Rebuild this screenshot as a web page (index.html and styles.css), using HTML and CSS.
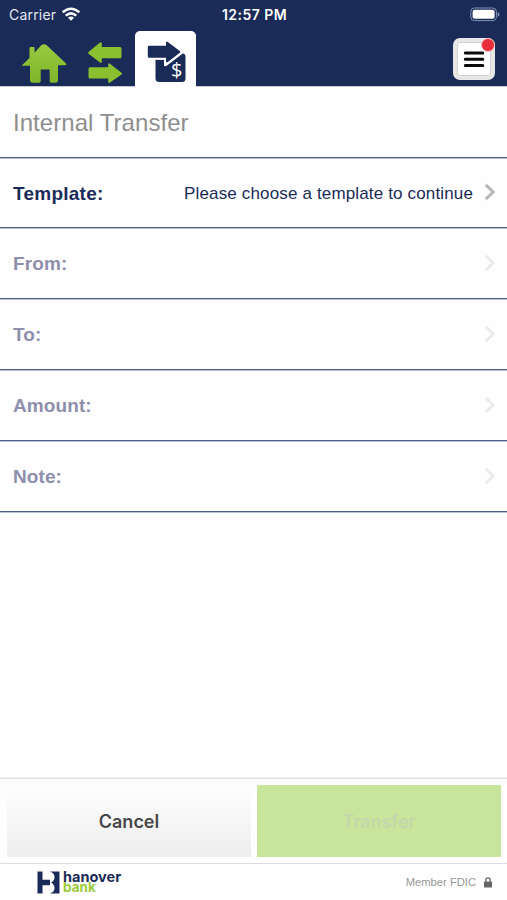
FILE: index.html
```html
<!DOCTYPE html>
<html lang="en">
  <head>
    <meta charset="utf-8">
    <title>Internal Transfer</title>
    <link rel="stylesheet" href="styles.css">
  </head>
  <body>
    <header class="header">
      <div class="status">
        <div class="carrier">
          <span>Carrier</span>
          <svg width="20" height="15" viewBox="0 0 20 15" fill="none" stroke="#fff" stroke-width="2.5">
            <path d="M1.7 5.3Q10-1.9 18.3 5.3" />
            <path d="M4.7 8.6Q10 4.1 15.3 8.6" />
            <path d="M7 10.7Q10 8.5 13 10.7L10 13.8Z" fill="#fff" stroke="none" />
          </svg>
        </div>
        <span class="time">12:57 PM</span>
        <svg class="battery" width="30" height="15" viewBox="0 0 30 15">
          <rect x=".8" y="1" width="25.6" height="12.6" rx="3.5" fill="none" stroke="#8590b2" />
          <rect x="2.6" y="2.8" width="22" height="9" rx="2" fill="#fff" />
          <path d="M27.7 5v5q1.8-1 1.8-2.5T27.7 5Z" fill="#8590b2" />
        </svg>
      </div>
      <nav class="tabs">
        <a class="tab home" href="#">
          <svg width="46" height="40" viewBox="0 0 46 40" fill="url(#green)">
            <defs>
              <linearGradient id="green" x1="0" y1="0" x2="0" y2="1">
                <stop offset="0" stop-color="#98ca3d" />
                <stop offset="1" stop-color="#7fb52b" />
              </linearGradient>
            </defs>
            <path d="M1 22.2 8.5 15V5q0-1 1-1h3q1 0 1 1v4.8L20 2.5q3-2.5 6 0L45 20.5q1.2 1.8-.7 1.8H37V37q0 2.7-2.5 2.7h-4.2q-1.6 0-1.6-1.7V26.5h-9V38q0 1.700-1.700 1.700h-6.500Q9 39.700 9 37V22.800H2q-1.700 0-1-.600Z" />
          </svg>
        </a>
        <a class="tab arrows" href="#">
          <svg width="34" height="42" viewBox="0 0 34 42" fill="#8ac02f">
            <path d="M.5 10 12 .6q1.8-1.2 1.8.8v3.5H32q1.5 0 1.5 1.5v8.4q0 1.5-1.5 1.5H13.8v3.5q0 1.8-1.8.7L.5 11.8Q-.3 11 .5 10Z" />
            <path d="m33.5 30.7-11.5-9q-1.8-1.2-1.8.8v2.8H2q-1.5 0-1.5 1.5V35q0 1.5 1.5 1.5h18.2v3.3q0 1.8 1.8.7l11.5-8q.8-.9 0-1.8Z" />
          </svg>
        </a>
        <a class="tab active" href="#">
          <svg width="40" height="42" viewBox="0 0 40 42">
            <path d="M8.500 18.500H17v5.200q.3 2.200 2 1.200L35 12.300q3.500.2 3.500 3.700v21.500q0 3.500-3.500 3.500H12.500q-4 0-4-3.500Z" fill="#1a2b58" />
            <path d="M8.500 18H18v5q0 2 1.500 1L36 11.500" fill="none" stroke="#fff" stroke-width="1.300" />
            <path d="M2 4.800h17V1.500q0-1.800 1.800-.5l12 9q1 .9 0 1.800L20.800 21q-1.800 1.200-1.800-.7v-3.500H2q-1.200 0-1.200-1.300V6q0-1.200 1.200-1.200Z" fill="#1a2b58" />
            <text class="dollar" x="24" y="36">$</text>
          </svg>
        </a>
        <button class="menu" aria-label="Menu">
          <svg width="22" height="20" viewBox="0 0 22 20" stroke="#0b0b0b" stroke-width="3" stroke-linecap="round">
            <path d="M2.300 4h17.500M2.300 10.200h17.500M2.300 16.500h17.500" />
          </svg>
          <span class="badge"></span>
        </button>
      </nav>
    </header>

    <main class="main">
      <h1 class="title">Internal Transfer</h1>
      <div class="row template">
        <label>Template:</label>
        <span class="value">Please choose a template to continue</span>
        <svg class="chevron" width="12" height="18" viewBox="0 0 12 18"><path d="m1.8 1.8 7.4 7.2-7.4 7.2" /></svg>
      </div>
      <div class="row disabled">
        <label>From:</label>
        <svg class="chevron" width="12" height="18" viewBox="0 0 12 18"><path d="m1.8 1.8 7.4 7.2-7.4 7.2" /></svg>
      </div>
      <div class="row disabled">
        <label>To:</label>
        <svg class="chevron" width="12" height="18" viewBox="0 0 12 18"><path d="m1.8 1.8 7.4 7.2-7.4 7.2" /></svg>
      </div>
      <div class="row disabled">
        <label>Amount:</label>
        <svg class="chevron" width="12" height="18" viewBox="0 0 12 18"><path d="m1.8 1.8 7.4 7.2-7.4 7.2" /></svg>
      </div>
      <div class="row disabled">
        <label>Note:</label>
        <svg class="chevron" width="12" height="18" viewBox="0 0 12 18"><path d="m1.8 1.8 7.4 7.2-7.4 7.2" /></svg>
      </div>
    </main>

    <div class="actions">
      <button class="cancel">Cancel</button>
      <button class="transfer" disabled>Transfer</button>
    </div>

    <footer class="footer">
      <div class="brand">
        <svg width="23" height="23" viewBox="0 0 23 23" fill="#1b2b59">
          <path d="M.5.5h5v8.300H13v5.400H5.500v8.300h-5Z" />
          <path d="M13 .5h9.500v22H13q4.500-1.500 4.500-5.500 0-3.500-3.500-5.500 3.500-2 3.500-5.500 0-4-4.500-5.500Z" />
        </svg>
        <div class="brand-name">
          <span>hanover</span>
          <span class="bank">bank</span>
        </div>
      </div>
      <div class="fdic">
        <span>Member FDIC</span>
        <svg width="8" height="11" viewBox="0 0 8 11">
          <path d="M1.8 5V3q0-2.200 2.200-2.200T6.200 3v2" fill="none" stroke="#666" stroke-width="1.300" />
          <rect y="4.600" width="8" height="6" rx=".7" fill="#666" />
        </svg>
      </div>
    </footer>
  </body>
</html>
```
FILE: styles.css
```css
* {
  box-sizing: border-box;
}
body {
  margin: 0;
  height: 100vh;
  display: flex;
  flex-direction: column;
  overflow: hidden;
  background: #fefefe;
  color: #1a2b58;
  font-family: "Liberation Sans", Arial, sans-serif;
}
svg {
  display: block;
  flex: none;
}
button {
  border: none;
  padding: 0;
  font-family: Inter, sans-serif;
}

/* header */
.header {
  height: 86px;
  background: #1a2b58;
  box-shadow: 0 1px 0 #c5cad9;
}
.status {
  height: 28px;
  padding: 0 7px 0 9px;
  display: grid;
  grid-template-columns: 1fr auto 1fr;
  align-items: center;
  color: #fff;
  font: 14px Inter, sans-serif;
}
.carrier {
  display: flex;
  align-items: center;
  gap: 5px;
  color: #e4e8f2;
  letter-spacing: 0.2px;
}
.time {
  font-weight: 600;
  font-size: 14px;
  letter-spacing: 0.45px;
}
.battery {
  justify-self: end;
}
.tabs {
  height: 58px;
  display: flex;
  align-items: flex-end;
  padding: 0 12px 0 21px;
}
.home {
  padding-bottom: 3px;
}
.arrows {
  margin-left: 21px;
  padding-bottom: 2px;
}
.active {
  width: 61px;
  height: 55px;
  margin-left: 13px;
  padding: 10px 0 0 12px;
  border-radius: 5px 5px 0 0;
  background: #fefefe;
  box-shadow: 0 1px 0 #fefefe;
}
.dollar {
  font: 20px "Open Sans", sans-serif;
  fill: #fff;
}
.menu {
  position: relative;
  width: 42px;
  height: 42px;
  margin: 0 0 6px auto;
  display: flex;
  align-items: center;
  justify-content: center;
  border: 4px solid #e7e7e7;
  border-radius: 7px;
  background: #fff;
  box-shadow: inset 0 0 0 1px #d1d1d1;
}
.badge {
  position: absolute;
  top: -4px;
  right: -4px;
  width: 14px;
  height: 14px;
  border: 1px solid #f3bfc3;
  border-radius: 50%;
  background: #e92e3b;
}

/* form rows */
.main {
  flex: 1;
}
.title,
.row {
  margin: 0;
  border-bottom: 1px solid #4c5f87;
  box-shadow: 0 1px 0 #b8c3d8;
}
.title {
  height: 72px;
  padding-left: 13px;
  color: #8f8f8f;
  font-size: 24px;
  font-weight: normal;
  line-height: 73px;
  letter-spacing: 0.05px;
}
.row {
  height: 71px;
  padding: 2px 11px 0 13px;
  display: flex;
  align-items: center;
}
.row label {
  font-size: 19px;
  font-weight: bold;
  letter-spacing: 0.1px;
}
.template {
  height: 70px;
}
.template label {
  letter-spacing: 0.25px;
}
.value {
  margin-left: auto;
  font-size: 17px;
  letter-spacing: 0.15px;
}
.chevron {
  margin: -3px 0 0 11px;
  fill: none;
  stroke: #b8b8b8;
  stroke-width: 3;
}
.disabled label {
  color: #8e8fac;
}
.disabled .chevron {
  margin-left: auto;
  stroke: #ebebeb;
}

/* bottom bar */
.actions {
  height: 86px;
  display: grid;
  grid-template-columns: 1fr 1fr;
  gap: 6px;
  padding: 6px 6px 6px 7px;
  border-top: 1px solid #ddd;
  border-bottom: 1px solid #ddd;
  box-shadow: 0 -1px 0 #efefef;
}
.actions button {
  font-size: 18px;
  font-weight: 600;
}
.cancel {
  color: #474747;
  background: linear-gradient(#fefefe, #eeeeee);
}
.transfer {
  color: #c4d7ab;
  background: #c9e49b;
}
.footer {
  height: 36px;
  padding: 0 15px 0 37px;
  display: flex;
  align-items: center;
  justify-content: space-between;
}
.brand {
  display: flex;
  gap: 3px;
}
.brand-name {
  display: flex;
  flex-direction: column;
  font: bold 14.5px/11px Inter, sans-serif;
  letter-spacing: 0;
}
.bank {
  color: #9bcb3b;
  font-size: 13.5px;
}
.fdic {
  display: flex;
  align-items: center;
  gap: 8px;
  color: #999;
  font-size: 11.2px;
}
```
